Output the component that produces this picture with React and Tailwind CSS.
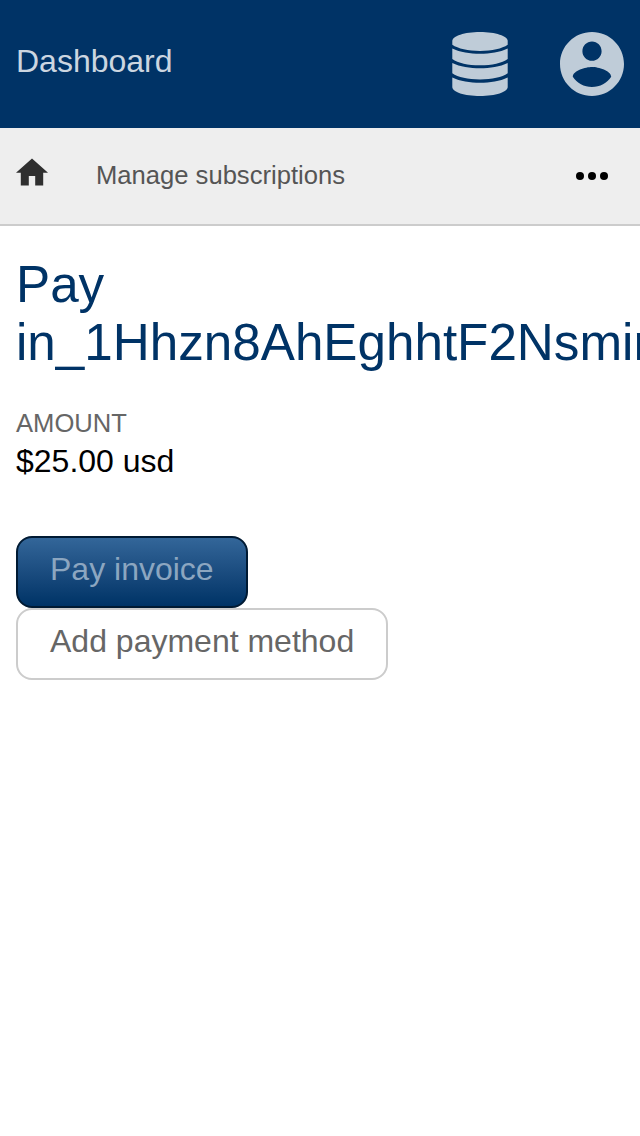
function DatabaseIcon() {
  return (
    <svg className="h-16 w-14 fill-[#bfccd8]" viewBox="0 0 56 64">
      <path d="M.3 9C.3 4 12.5 0 28 0S55.7 4 55.7 9v3.8C50 16.7 40 18.9 28 18.9S6 16.7.3 12.8z" />
      <path d="M.3 16.4C8 20.1 18 21.7 28 21.7S48 20.1 55.7 16.4V26.9C50 31 40 33.2 28 33.2S6 31 .3 26.9z" />
      <path d="M.3 30.9C8 34.6 18 36.2 28 36.2S48 34.6 55.7 30.9V41.3C50 45.3 40 47.5 28 47.5S6 45.3.3 41.3z" />
      <path d="M.3 45.4C8 49.1 18 50.7 28 50.7S48 49.1 55.7 45.4V55C55.7 60 43.5 64 28 64S.3 60 .3 55z" />
    </svg>
  );
}

function AccountIcon() {
  return (
    <svg className="h-16 w-16 fill-[#bfccd8]" viewBox="2 2 20 20">
      <path d="M12 2C6.48 2 2 6.48 2 12s4.48 10 10 10 10-4.48 10-10S17.52 2 12 2zm0 3c1.66 0 3 1.34 3 3s-1.34 3-3 3-3-1.34-3-3 1.34-3 3-3zm0 14.2c-2.5 0-4.71-1.28-6-3.22.03-1.99 4-3.08 6-3.08 1.99 0 5.97 1.09 6 3.08-1.29 1.94-3.5 3.22-6 3.22z" />
    </svg>
  );
}

export default function App() {
  return (
    <div className="min-h-screen w-full overflow-hidden bg-white font-['Liberation_Sans',Arial,sans-serif] text-[32px] text-black">
      <header className="flex h-32 items-center justify-between bg-[#003366] px-4">
        <span className="-mt-1.5 leading-9 text-[#ccd6e0]">Dashboard</span>
        <div className="flex items-center gap-[52px]">
          <DatabaseIcon />
          <AccountIcon />
        </div>
      </header>
      <nav className="flex h-[98px] items-center border-b-2 border-[#cccccc] bg-[#eeeeee] pr-8 pl-4">
        <svg className="-mt-2 h-7 w-8 fill-[#2f2f2f]" viewBox="2 2.75 20 17.5">
          <path d="M10 20v-6h4v6h5v-8h3L12 3 2 12h3v8z" />
        </svg>
        <span className="-mt-0.5 ml-12 text-[25.6px] leading-8 text-[#555555]">Manage subscriptions</span>
        <svg className="ml-auto h-2 w-8 fill-black" viewBox="0 0 32 8">
          <circle cx="4" cy="4" r="4" />
          <circle cx="16" cy="4" r="4" />
          <circle cx="28" cy="4" r="4" />
        </svg>
      </nav>
      <main className="px-4 pt-[30px]">
        <h1 className="text-[51.2px] leading-[58px] whitespace-nowrap text-[#003366]">
          Pay
          <br />
          in_1Hhzn8AhEghhtF2NsmimuR9t
        </h1>
        <dl className="mt-9">
          <dt className="text-[25.6px] leading-[30px] text-[#666666]">AMOUNT</dt>
          <dd className="mt-[5px] leading-9">$25.00 usd</dd>
        </dl>
        <div className="mt-[57px] flex flex-col items-start">
          <button className="h-[72px] rounded-2xl border-2 border-[#001a33] bg-linear-to-b from-[#336699] to-[#003366] px-8 pb-1.5 leading-9 text-[#8ca6c0]">
            Pay invoice
          </button>
          <button className="h-[72px] rounded-2xl border-2 border-[#cccccc] bg-white px-8 pb-1.5 leading-9 text-[#666666]">
            Add payment method
          </button>
        </div>
      </main>
    </div>
  );
}
